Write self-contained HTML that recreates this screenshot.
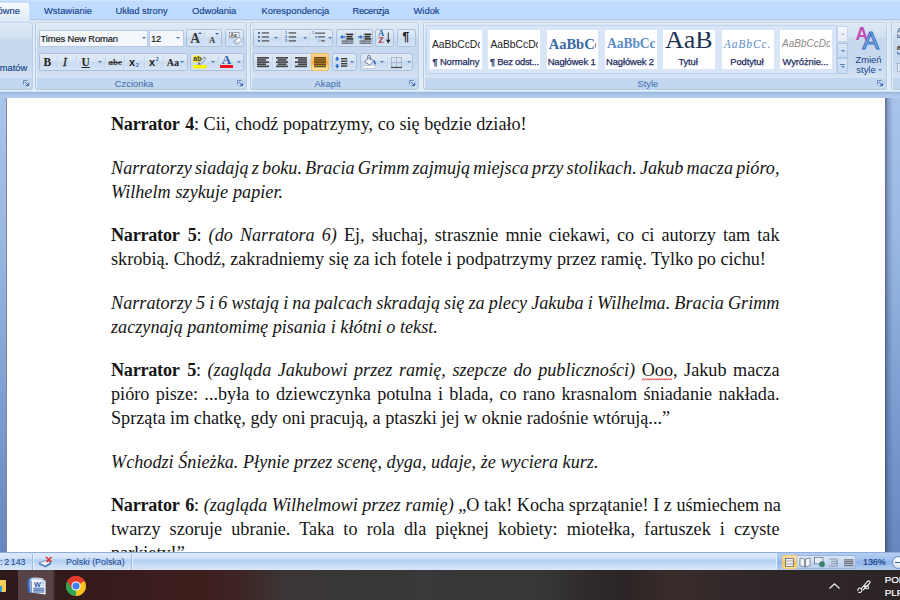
<!DOCTYPE html>
<html lang="pl"><head><meta charset="utf-8"><title>Word</title>
<style>
*{box-sizing:border-box;margin:0;padding:0}
html,body{width:900px;height:600px;overflow:hidden}
body{background:linear-gradient(#a8c4eb 0,#a8c4eb 97px,#97b6e2 250px,#7d9ed1 400px,#6687bf 552px,#6687bf 100%)}
body{position:relative;font-family:"Liberation Sans",sans-serif;font-size:9.4px;color:#15428b}
.abs{position:absolute}
#tabs{left:0;top:0;width:900px;height:18.8px;z-index:2;background:linear-gradient(#d3e5fc 0,#c3ddfe 1.5px,#bfdbff 3px,#bfdbff 100%)}
.tab{position:absolute;top:6.2px;height:10px;line-height:10px;white-space:nowrap;color:#15428b;-webkit-text-stroke:.15px #15428b}
#acttab{left:-20px;top:1.5px;width:49.7px;height:19px;border:1px solid #cfdff5;border-bottom:none;border-radius:3.5px 3.5px 0 0;background:linear-gradient(#f6f9fd,#eaf1f9 60%,#dfe8f5);box-shadow:0 0 1px #9fbfe8}
#ribbon{left:0;top:18.8px;width:900px;height:72.7px;background:linear-gradient(#dde7f5 0,#dbe7f5 12px,#dce8f6 30px,#dfebf8 60px,#e3eefa 70px);border-top:1.2px solid #a9c8ee;box-shadow:inset 0 1px 0 #d9e4f2}
#ribline{left:0;top:90.7px;width:900px;height:1.3px;background:#c6e9f3}
#wsTop{left:0;top:92px;width:900px;height:6px;background:linear-gradient(#98b3d6 0,#a5c0e5 1.5px,#b6cff0 100%)}
.grp{position:absolute;top:21.5px;height:68.5px;border:1px solid #b7cce7;border-top-color:#c6d6ea;border-radius:3px;background:linear-gradient(#dfe9f5 0,#d3e0f1 14px,#c8d9ee 15px,#c6d8ee 40px,#d6e4f4 55.5px,#c2d8f0 55.5px,#c1d7ef 100%);box-shadow:1px 0 0 #e6effa, inset 1px 1px 0 #e3ecf7}
.glabel{position:absolute;left:0;right:14px;bottom:-1px;height:11px;line-height:10px;text-align:center;color:#3e6aaa;font-size:9.4px}
.launch{position:absolute;right:2px;bottom:2.5px;width:7px;height:7px}
.bg{position:absolute;height:17.7px;border:1px solid #aac0dd;border-radius:2.5px;background:linear-gradient(#e3ecf7 0,#d6e3f3 45%,#c9daef 50%,#d5e4f5 100%)}
.sep{position:absolute;top:1px;bottom:1px;width:1px;background:#c6d6eb;box-shadow:1px 0 0 #dde8f5}
.combo{position:absolute;top:29.5px;height:17.5px;border:1px solid #b3c9e4;background:#f3f7fc;color:#1a1a1a;line-height:15.5px;padding-left:1px;white-space:nowrap;letter-spacing:-.13px;-webkit-text-stroke:.2px #1a1a1a}
.arr{position:absolute;width:0;height:0;border-left:2.2px solid transparent;border-right:2.2px solid transparent;border-top:2.8px solid #4f78b8}
svg{position:absolute;overflow:visible}
.ser,.sans{position:absolute;white-space:nowrap;color:#222;line-height:1.15}
.ser{font-family:"Liberation Serif",serif}
.sans{font-family:"Liberation Sans",sans-serif}
.arr.up{border-top:none;border-bottom:2.5px solid #5a7db5}
.arr.big{border-left-width:2.2px;border-right-width:2.2px;border-top-color:#3565b0;border-bottom-color:#3565b0}
.tile{position:absolute;top:30.3px;width:51.8px;height:38.5px;background:#fff;overflow:hidden}
.clip{position:absolute;left:0;top:1.4px;width:49.7px;height:37px;overflow:hidden}
.smp{position:absolute;white-space:nowrap;line-height:1.15}
.tn{position:absolute;top:26.7px;letter-spacing:-.1px;-webkit-text-stroke:.25px #1c2b63;white-space:nowrap;font-size:9.4px;line-height:10px;color:#1c2b63}
#page{left:6px;top:97.5px;width:879.3px;height:455px;background:#fff;border-left:1px solid #7f8791}
#pshadow{left:885.3px;top:97.5px;width:8px;height:455px;background:linear-gradient(90deg,rgba(40,50,75,.6),rgba(50,65,100,.28) 35%,rgba(60,80,120,0))}
#doc{left:111px;top:0;width:668.5px;font-family:"Liberation Serif",serif;font-size:18.2px;color:#151515;line-height:24px}
.ln{position:absolute;left:0;height:24px;white-space:nowrap;text-align:justify;text-align-last:justify}
.ln b{letter-spacing:-.27px;word-spacing:1.7px}
.sq{position:relative;display:inline-block}
#status{left:0;top:552px;width:900px;height:18px;font-size:8.9px;background:linear-gradient(#dce9fa 0,#d3e4f9 28%,#b6d1f5 42%,#b4d0f5 52%,#c6dcf7 68%,#d9e7f9 100%);border-top:1px solid #8fadd8}
#task{left:0;top:570px;width:900px;height:30px;background:linear-gradient(90deg,#2f1a1b 0,#351b1b 90px,#3d1e1d 200px,#3d2523 240px,#3b3636 285px,#38393a 420px,#373737 540px,#2f292a 590px,#2b2425 625px,#3a2c2b 672px,#33292a 720px,#2f2627 780px,#2c2425 900px)}
</style></head><body>
<div id="tabs" class="abs">
 <div id="acttab" class="abs"></div>
 <span class="tab" style="left:-2.5px">ówne</span>
 <span class="tab" style="left:44px">Wstawianie</span>
 <span class="tab" style="left:115.5px">Układ strony</span>
 <span class="tab" style="left:192px">Odwołania</span>
 <span class="tab" style="left:261.5px">Korespondencja</span>
 <span class="tab" style="left:352.5px;letter-spacing:-.35px">Recenzja</span>
 <span class="tab" style="left:413.5px">Widok</span>
</div>
<div id="ribbon" class="abs"></div>
<div id="ribline" class="abs"></div>
<div id="wsTop" class="abs"></div>

<!-- groups -->
<div class="grp" style="left:-10px;width:42.8px"><span class="abs" style="left:8.7px;top:40.5px;line-height:10px;white-space:nowrap;-webkit-text-stroke:.15px #15428b">matów</span><div class="launch"><svg style="left:0;top:0" width="7" height="7" viewBox="0 0 7 7"><path d="M.5 4.5 V.5 H4.5" fill="none" stroke="#6d8cbc" stroke-width="1"/><path d="M3.5 6.8 H6.8 V3.5" fill="none" stroke="#f4f8fd" stroke-width="1"/><path d="M2 2 L5.5 5.5 M5.8 2.8 V5.8 H2.8" fill="none" stroke="#3f69a8" stroke-width="1"/><path d="M3.2 5.8 H5.8 V3.2Z" fill="#3f69a8"/></svg></div></div>
<div class="grp" id="gFont" style="left:35.3px;width:211.5px"><div class="glabel">Czcionka</div><div class="launch"><svg style="left:0;top:0" width="7" height="7" viewBox="0 0 7 7"><path d="M.5 4.5 V.5 H4.5" fill="none" stroke="#6d8cbc" stroke-width="1"/><path d="M3.5 6.8 H6.8 V3.5" fill="none" stroke="#f4f8fd" stroke-width="1"/><path d="M2 2 L5.5 5.5 M5.8 2.8 V5.8 H2.8" fill="none" stroke="#3f69a8" stroke-width="1"/><path d="M3.2 5.8 H5.8 V3.2Z" fill="#3f69a8"/></svg></div></div>
<div class="grp" id="gPar" style="left:250.3px;width:168.5px"><div class="glabel">Akapit</div><div class="launch"><svg style="left:0;top:0" width="7" height="7" viewBox="0 0 7 7"><path d="M.5 4.5 V.5 H4.5" fill="none" stroke="#6d8cbc" stroke-width="1"/><path d="M3.5 6.8 H6.8 V3.5" fill="none" stroke="#f4f8fd" stroke-width="1"/><path d="M2 2 L5.5 5.5 M5.8 2.8 V5.8 H2.8" fill="none" stroke="#3f69a8" stroke-width="1"/><path d="M3.2 5.8 H5.8 V3.2Z" fill="#3f69a8"/></svg></div></div>
<div class="grp" id="gSty" style="left:422.5px;width:464.7px"><div class="glabel">Style</div><div class="launch"><svg style="left:0;top:0" width="7" height="7" viewBox="0 0 7 7"><path d="M.5 4.5 V.5 H4.5" fill="none" stroke="#6d8cbc" stroke-width="1"/><path d="M3.5 6.8 H6.8 V3.5" fill="none" stroke="#f4f8fd" stroke-width="1"/><path d="M2 2 L5.5 5.5 M5.8 2.8 V5.8 H2.8" fill="none" stroke="#3f69a8" stroke-width="1"/><path d="M3.2 5.8 H5.8 V3.2Z" fill="#3f69a8"/></svg></div></div>
<div class="grp" style="left:891.3px;width:30px">
 <svg style="left:4.5px;top:5px" width="8" height="10" viewBox="0 0 8 10"><path d="M.5 3.5 L2 .5 H6 L7.5 3.5 V9.5 H.5Z" fill="#9fb0cc" stroke="#52627f" stroke-width=".7"/><rect x=".5" y="4.5" width="7" height="2" fill="#eef2f8"/></svg>
 <span class="sans" style="left:4.5px;top:20.5px;font-size:8px;font-weight:bold;color:#444">ab</span>
 <svg style="left:4.5px;top:25px" width="8" height="7" viewBox="0 0 8 7"><path d="M0 4 C1 7 5 7 7 4.5" fill="none" stroke="#4c6fa8" stroke-width="1.1"/></svg>
 <svg style="left:5px;top:40.5px" width="7" height="9" viewBox="0 0 7 9"><rect x=".4" y=".4" width="7" height="8" fill="#e3e9f3" stroke="#93a2bc" stroke-width=".7"/></svg>
</div>


<!-- Czcionka group content -->
<div class="combo" style="left:38.5px;width:109.5px">Times New Roman<i class="arr" style="left:102px;top:6.5px"></i></div>
<div class="combo" style="left:149px;width:34.5px">12<i class="arr" style="left:26px;top:6.5px"></i></div>
<div class="bg" style="left:186.3px;top:29.2px;width:36px"><div class="sep" style="left:17px"></div>
 <span class="ser" style="left:3px;top:1.2px;font-size:13.6px;font-weight:bold;color:#3a3a3a">A</span><i class="arr up big" style="left:11px;top:2.3px"></i>
 <span class="ser" style="left:21.7px;top:5.8px;font-size:8.6px;font-weight:bold;color:#3a3a3a">A</span><i class="arr big" style="left:28px;top:2.6px"></i>
</div>
<div class="bg" style="left:225px;top:29.2px;width:19.3px">
 <svg style="left:2.7px;top:2.2px" width="14" height="13" viewBox="0 0 14 13"><rect x="0.4" y="0.4" width="9.6" height="5" fill="#f7f7f9" stroke="#7d8694" stroke-width=".7"/><text x="1.6" y="4.7" font-size="4.6" font-weight="bold" font-family="Liberation Sans" fill="#333">Aa</text><path d="M4.6 10 L10 5.4 L13 8 L8 12.4 Z" fill="#fdfdfe" stroke="#7d8aa0" stroke-width=".7"/><path d="M4.6 10 L6 8.8 L9.3 11.3 L8 12.4Z" fill="#dfe4ee" stroke="#7d8aa0" stroke-width=".5"/></svg>
</div>
<div class="bg" style="left:38.5px;top:53px;width:149px">
 <div class="sep" style="left:17.5px"></div><div class="sep" style="left:36.5px"></div><div class="sep" style="left:65.5px"></div><div class="sep" style="left:84px"></div><div class="sep" style="left:104.5px"></div><div class="sep" style="left:123.5px"></div>
 <span class="ser" style="left:4px;top:1.5px;font-size:11.5px;font-weight:bold">B</span>
 <span class="ser" style="left:23.5px;top:1.5px;font-size:11.5px;font-style:italic;-webkit-text-stroke:.3px #222">I</span>
 <span class="ser" style="left:42px;top:1.5px;font-size:11.5px;font-weight:bold;text-decoration:underline">U</span><i class="arr" style="left:58.5px;top:6.5px"></i>
 <span class="ser" style="left:69px;top:2.5px;font-size:9px;font-weight:bold;text-decoration:line-through;color:#3a3a3a">abc</span>
 <span class="sans" style="left:89.5px;top:1.5px;font-size:11px;font-weight:bold">x</span><span class="sans" style="left:96.5px;top:9.3px;font-size:4.8px;color:#2a5db0;font-weight:bold">2</span>
 <span class="sans" style="left:109.5px;top:1.5px;font-size:11px;font-weight:bold">x</span><span class="sans" style="left:116.5px;top:3px;font-size:4.6px;color:#2a5db0;font-weight:bold">2</span>
 <span class="ser" style="left:127.3px;top:2.8px;font-size:10px;font-weight:bold">Aa</span><i class="arr" style="left:140px;top:6.5px"></i>
</div>
<div class="bg" style="left:190px;top:53px;width:54.3px"><div class="sep" style="left:27px"></div>
 <svg style="left:2px;top:1px" width="15" height="14" viewBox="0 0 15 14"><rect x="0" y="10" width="13.5" height="3.4" fill="#fff200"/><rect x="0" y="0.4" width="8" height="7" fill="#f4ea3a"/><text x="0.3" y="6.2" font-size="7" font-weight="bold" font-family="Liberation Sans" fill="#3a3a20">ab</text><path d="M5.5 8 L11 2 L13 3.4 L7.6 9.2 Z" fill="#dfe6f2" stroke="#50607e" stroke-width=".7"/><path d="M5.5 8 L4.6 9.8 L7.6 9.2Z" fill="#3f4d68"/></svg>
 <i class="arr" style="left:19.5px;top:6.5px"></i>
 <span class="ser" style="left:30.8px;top:-1.2px;font-size:13px;font-weight:bold;color:#2f5fa8">A</span>
 <div class="abs" style="left:28.8px;top:11px;width:13.2px;height:3.4px;background:#f01019"></div>
 <i class="arr" style="left:46px;top:6.5px"></i>
</div>

<!-- Akapit group content -->
<div class="bg" style="left:253.3px;top:29.2px;width:80px"><div class="sep" style="left:26.5px"></div><div class="sep" style="left:54.5px"></div>
 <svg style="left:3.3px;top:2.3px" width="12" height="10.2" preserveAspectRatio="none" viewBox="0 0 13 11"><g fill="#2f5fa8"><rect x="0" y="0" width="2" height="2"/><rect x="0" y="4.3" width="2" height="2"/><rect x="0" y="8.6" width="2" height="2"/></g><g fill="#555"><rect x="4" y=".3" width="8" height="1.4"/><rect x="4" y="4.6" width="8" height="1.4"/><rect x="4" y="8.9" width="8" height="1.4"/></g></svg>
 <i class="arr" style="left:20px;top:6.5px"></i>
 <svg style="left:31px;top:2.3px" width="12" height="10.2" preserveAspectRatio="none" viewBox="0 0 13 11"><g fill="#2f5fa8" font-size="3.6" font-family="Liberation Sans" font-weight="bold"><text x="0" y="2.6">1</text><text x="0" y="6.9">2</text><text x="0" y="11">3</text></g><g fill="#555"><rect x="4" y=".3" width="8" height="1.4"/><rect x="4" y="4.6" width="8" height="1.4"/><rect x="4" y="8.9" width="8" height="1.4"/></g></svg>
 <i class="arr" style="left:48.5px;top:6.5px"></i>
 <svg style="left:57.5px;top:2.3px" width="14" height="10.2" preserveAspectRatio="none" viewBox="0 0 15 11"><g fill="#2f5fa8" font-size="3.4" font-family="Liberation Sans" font-weight="bold"><text x="0" y="2.6">1</text><text x="3.5" y="6.9">a</text><text x="7" y="11">i</text></g><g fill="#555"><rect x="3" y=".6" width="11" height="1.3"/><rect x="6.5" y="4.6" width="7.5" height="1.3"/><rect x="9.5" y="8.9" width="4.5" height="1.3"/></g></svg>
 <i class="arr" style="left:73.5px;top:6.5px"></i>
</div>
<div class="bg" style="left:336.3px;top:29.2px;width:36.3px"><div class="sep" style="left:17.5px"></div>
 <svg style="left:2.7px;top:3px" width="13.3" height="11" viewBox="0 0 13.3 11"><rect x="5.7" y="0" width=".7" height="11" fill="#666"/><g fill="#2b2b2b"><rect x="6.8" y=".6" width="6.5" height="1.6"/><rect x="6.8" y="2.9" width="5.6" height="1.6"/><rect x="6.8" y="5.1" width="6.5" height="1.6"/></g><g fill="#6a6f78"><rect x="1.5" y="7.4" width="11.8" height="1.4"/><rect x="1.5" y="9.5" width="11.8" height="1.4"/></g><path d="M0 4 L2.6 1.8 V3.2 H5 V4.8 H2.6 V6.2Z" fill="#2a6fd6"/></svg>
 <svg style="left:20.3px;top:3px" width="13.3" height="11" viewBox="0 0 13.3 11"><rect x="5.7" y="0" width=".7" height="11" fill="#666"/><g fill="#2b2b2b"><rect x="6.8" y=".6" width="6.5" height="1.6"/><rect x="6.8" y="2.9" width="5.6" height="1.6"/><rect x="6.8" y="5.1" width="6.5" height="1.6"/></g><g fill="#6a6f78"><rect x="1.5" y="7.4" width="11.8" height="1.4"/><rect x="1.5" y="9.5" width="11.8" height="1.4"/></g><path d="M5 4 L2.4 1.8 V3.2 H0 V4.8 H2.4 V6.2Z" fill="#2a6fd6"/></svg>
</div>
<div class="bg" style="left:375.3px;top:29.2px;width:19px">
 <span class="ser" style="left:1.7px;top:0.2px;font-size:8.6px;font-weight:bold;color:#2f5fa8;line-height:7.5px">A</span>
 <span class="ser" style="left:2px;top:7.2px;font-size:8.6px;font-weight:bold;color:#ad2f36;line-height:7.5px">Z</span>
 <svg style="left:9.7px;top:2px" width="4.5" height="12" viewBox="0 0 5 12"><path d="M2 0 H3 V8 H5 L2.5 12 L0 8 H2Z" fill="#222"/></svg>
</div>
<div class="bg" style="left:397px;top:29.2px;width:19px"><span class="sans" style="left:4.5px;top:1px;font-size:12px;font-weight:bold;color:#222;line-height:13px">¶</span></div>

<div class="bg" style="left:253.3px;top:53px;width:75.3px"><div class="sep" style="left:18px"></div><div class="sep" style="left:37px"></div>
 <svg style="left:2.7px;top:3.3px" width="12" height="10.2" preserveAspectRatio="none" viewBox="0 0 12 11"><g fill="#444"><rect x="0" y="0" width="12" height="1.8"/><rect x="0" y="2.3" width="9" height="1.8"/><rect x="0" y="4.6" width="12" height="1.8"/><rect x="0" y="6.9" width="9" height="1.8"/><rect x="0" y="9.2" width="12" height="1.8"/></g></svg>
 <svg style="left:21.7px;top:3.3px" width="12" height="10.2" preserveAspectRatio="none" viewBox="0 0 12 11"><g fill="#444"><rect x="0" y="0" width="12" height="1.8"/><rect x="1.5" y="2.3" width="9" height="1.8"/><rect x="0" y="4.6" width="12" height="1.8"/><rect x="1.5" y="6.9" width="9" height="1.8"/><rect x="0" y="9.2" width="12" height="1.8"/></g></svg>
 <svg style="left:40.7px;top:3.3px" width="12" height="10.2" preserveAspectRatio="none" viewBox="0 0 12 11"><g fill="#444"><rect x="0" y="0" width="12" height="1.8"/><rect x="3" y="2.3" width="9" height="1.8"/><rect x="0" y="4.6" width="12" height="1.8"/><rect x="3" y="6.9" width="9" height="1.8"/><rect x="0" y="9.2" width="12" height="1.8"/></g></svg>
 <div class="abs" style="left:56.5px;top:-1px;width:18px;height:17.5px;border:1px solid #f2bd62;border-radius:0 2px 2px 0;background:linear-gradient(#fdd293 0,#fcbf5d 40%,#fbac38 52%,#fdd67f 80%,#fee9a6 100%)"></div>
 <svg style="left:59.5px;top:3.3px" width="12" height="10.2" preserveAspectRatio="none" viewBox="0 0 12 11"><g fill="#6b4a14"><rect x="0" y="0" width="12" height="1.8"/><rect x="0" y="2.3" width="12" height="1.8"/><rect x="0" y="4.6" width="12" height="1.8"/><rect x="0" y="6.9" width="12" height="1.8"/><rect x="0" y="9.2" width="12" height="1.8"/></g></svg>
</div>
<div class="bg" style="left:331.7px;top:53px;width:25px">
 <svg style="left:2.3px;top:2px" width="13" height="13" viewBox="0 0 13 13"><path d="M2.2 .3 L4.4 3.6 H3 V5 H1.4 V3.6 H0Z M2.2 12.7 L4.4 9.4 H3 V8 H1.4 V9.4 H0Z" fill="#2a6fd6"/><g fill="#3c3c3c"><rect x="6" y="2" width="6.3" height="1.4"/><rect x="6" y="4.5" width="6.3" height="1.4"/><rect x="6" y="7" width="6.3" height="1.4"/><rect x="6" y="9.4" width="6.3" height="1.4"/></g></svg>
 <i class="arr" style="left:17px;top:6.5px"></i>
</div>
<div class="bg" style="left:359.7px;top:53px;width:53.8px"><div class="sep" style="left:26.5px"></div>
 <svg style="left:2.6px;top:1px" width="14" height="14" viewBox="0 0 14 14"><rect x="0" y="10.4" width="12.6" height="2.8" fill="#fdfdfd" stroke="#a4adba" stroke-width=".5"/><path d="M1.6 6.6 L6 2.6 L10.8 6 L6.6 10 Z" fill="#f4f6fa" stroke="#5b6680" stroke-width=".8"/><path d="M4.6 4 V1.6 a1.3 1.3 0 0 1 2.6 0 V5.5" fill="none" stroke="#5b6680" stroke-width=".8"/><path d="M10.4 5 c2.4 .4 3 3 2 5 c-1.2 -.6 -1.8 -2.6 -2 -5z" fill="#2a6fd6"/></svg>
 <i class="arr" style="left:19.5px;top:6.5px"></i>
 <svg style="left:30px;top:3px" width="11" height="11" viewBox="0 0 11 11"><rect x=".4" y=".4" width="10.2" height="10.2" fill="none" stroke="#a3afc2" stroke-width=".8"/><path d="M5.5 0 V11 M0 5.5 H11" stroke="#a3afc2" stroke-width=".8"/><rect x="0" y="9.8" width="11" height="1.3" fill="#4a4a4a"/></svg>
 <i class="arr" style="left:46px;top:6.5px"></i>
</div>

<!-- Style gallery -->
<div class="abs" style="left:426.3px;top:25.3px;width:411px;height:48.5px;border:1px solid #c0d4ed;background:#d8e6f7"></div>
<div class="tile" style="left:430.0px"><div class="clip"><span class="smp" style="font-family:'Liberation Sans',sans-serif;font-size:10.3px;color:#222;left:2px;top:7.6px">AaBbCcDc</span></div><span class="tn" style="left:2.5px">¶ Normalny</span></div>
<div class="tile" style="left:488.4px"><div class="clip"><span class="smp" style="font-family:'Liberation Sans',sans-serif;font-size:10.3px;color:#222;left:2px;top:7.6px">AaBbCcDc</span></div><span class="tn" style="left:1.7px;letter-spacing:-.25px">¶ Bez odst...</span></div>
<div class="tile" style="left:546.7px"><div class="clip"><span class="smp" style="font-family:'Liberation Serif',serif;font-weight:bold;font-size:14.5px;color:#3a67a6;left:2px;top:4px">AaBbCc</span></div><span class="tn" style="left:1px">Nagłówek 1</span></div>
<div class="tile" style="left:605.0px"><div class="clip"><span class="smp" style="font-family:'Liberation Serif',serif;font-weight:bold;font-size:13.6px;letter-spacing:-.1px;color:#5b8cc9;left:2px;top:4px">AaBbCc</span></div><span class="tn" style="left:1px">Nagłówek 2</span></div>
<div class="tile" style="left:663.4px"><div class="clip"><span class="smp" style="font-family:'Liberation Serif',serif;font-size:26px;color:#1f3556;left:1.5px;top:-6.3px">AaB</span></div><span class="tn" style="left:15px">Tytuł</span></div>
<div class="tile" style="left:721.8px"><div class="clip"><span class="smp" style="font-family:'Liberation Serif',serif;font-style:italic;font-size:11.5px;letter-spacing:.9px;color:#5b8cc9;left:2px;top:5.9px">AaBbCc.</span></div><span class="tn" style="left:8.5px">Podtytuł</span></div>
<div class="tile" style="left:780.1px"><div class="clip"><span class="smp" style="font-family:'Liberation Sans',sans-serif;font-style:italic;font-size:10px;color:#8e8a84;left:2px;top:6.8px">AaBbCcDc</span></div><span class="tn" style="left:2.5px">Wyróżnie...</span></div>
<div class="abs" style="left:837px;top:26px;width:11px;height:16px;border:1px solid #c3d3e8;background:linear-gradient(#f4f7fb,#e6ecf4);border-radius:2px 2px 0 0"><i class="arr up" style="left:2.5px;top:6px;border-bottom-color:#b4bccb"></i></div>
<div class="abs" style="left:837px;top:43px;width:11px;height:14.5px;border:1px solid #b0c7e5;background:linear-gradient(#dbe8f7,#c6daf2)"><i class="arr" style="left:2.5px;top:5.5px"></i></div>
<div class="abs" style="left:837px;top:58px;width:11px;height:15.5px;border:1px solid #b0c7e5;background:linear-gradient(#dbe8f7,#c6daf2);border-radius:0 0 2px 2px"><i class="abs" style="left:2px;top:4.5px;width:5px;height:1px;background:#5a7db5"></i><i class="arr" style="left:2.5px;top:7px"></i></div>
<svg style="left:855.5px;top:27px" width="24" height="23" viewBox="0 0 24 23"><text x="-.5" y="12.5" font-family="Liberation Sans" font-weight="bold" font-size="17.5" fill="#c24fb7">A</text><text x="6.5" y="22" font-family="Liberation Sans" font-size="24.5" fill="#8fb6ea" stroke="#3d73c2" stroke-width="1.1">A</text></svg>
<span class="abs" style="left:855.5px;top:54.5px;width:25px;text-align:center;line-height:10.3px;font-size:9.4px;white-space:nowrap">Zmień<br>style<i class="arr" style="position:relative;display:inline-block;top:-1.5px;left:2.5px"></i></span>
<div id="page" class="abs"></div>
<div id="pshadow" class="abs"></div>
<div id="doc" class="abs">
 <div class="ln" style="top:112px;width:412.5px"><b>Narrator 4</b>: Cii, chodź popatrzymy, co się będzie działo!</div>
 <div class="ln" style="top:156.0px;width:668.5px;word-spacing:-2px"><i>Narratorzy siadają z boku. Bracia Grimm zajmują miejsca przy stolikach. Jakub macza pióro,</i></div>
 <div class="ln" style="top:180.0px;width:172px"><i>Wilhelm szykuje papier.</i></div>
 <div class="ln" style="top:223.4px;width:668.5px"><b>Narrator 5</b>: <i>(do Narratora 6)</i> Ej, słuchaj, strasznie mnie ciekawi, co ci autorzy tam tak</div>
 <div class="ln" style="top:247.4px;width:651.5px">skrobią. Chodź, zakradniemy się za ich fotele i podpatrzymy przez ramię. Tylko po cichu!</div>
 <div class="ln" style="top:290.8px;width:668.5px;word-spacing:-2px"><i>Narratorzy 5 i 6 wstają i na palcach skradają się za plecy Jakuba i Wilhelma. Bracia Grimm</i></div>
 <div class="ln" style="top:314.8px;width:323.5px"><i>zaczynają pantomimę pisania i kłótni o tekst.</i></div>
 <div class="ln" style="top:358.2px;width:668.5px"><b>Narrator 5</b>: <i>(zagląda Jakubowi przez ramię, szepcze do publiczności)</i> <span class="sq">Ooo<svg style="left:0;top:20.3px" width="30" height="3" viewBox="0 0 30 3"><path d="M0 2.2 L1.15 0.5 L2.30 2.2 L3.45 0.5 L4.60 2.2 L5.75 0.5 L6.90 2.2 L8.05 0.5 L9.20 2.2 L10.35 0.5 L11.50 2.2 L12.65 0.5 L13.80 2.2 L14.95 0.5 L16.10 2.2 L17.25 0.5 L18.40 2.2 L19.55 0.5 L20.70 2.2 L21.85 0.5 L23.00 2.2 L24.15 0.5 L25.30 2.2 L26.45 0.5 L27.60 2.2 L28.75 0.5 L29.90 2.2" fill="none" stroke="#ec3b3b" stroke-width=".9"/></svg></span>, Jakub macza</div>
 <div class="ln" style="top:382.2px;width:668.5px">pióro pisze: ...była to dziewczynka potulna i blada, co rano krasnalom śniadanie nakłada.</div>
 <div class="ln" style="top:406.2px;width:557.5px">Sprząta im chatkę, gdy oni pracują, a ptaszki jej w oknie radośnie wtórują...”</div>
 <div class="ln" style="top:449.6px;width:487.5px"><i>Wchodzi Śnieżka. Płynie przez scenę, dyga, udaje, że wyciera kurz.</i></div>
 <div class="ln" style="top:493.0px;width:668.5px"><b>Narrator 6</b>: <i>(zagląda Wilhelmowi przez ramię)</i> „O tak! Kocha sprzątanie! I z uśmiechem na</div>
 <div class="ln" style="top:517.0px;width:668.5px">twarzy szoruje ubranie. Taka to rola dla pięknej kobiety: miotełka, fartuszek i czyste</div>
 <div class="ln" style="top:541.0px;width:72px">parkiety!”</div>
</div>
<div id="status" class="abs">
 <span class="abs" style="left:0;top:4px;line-height:10px;white-space:nowrap;word-spacing:-.8px">: 2 143</span>
 <div class="abs" style="left:32px;top:1px;width:1px;height:16px;background:#9bb8de;box-shadow:1px 0 0 #e8f1fc"></div>
 <svg style="left:39px;top:2.5px" width="14" height="12" viewBox="0 0 14 12"><path d="M0 7 L6 4.5 L12 6.5 L6.5 10Z" fill="#e8eef8" stroke="#4a6ea8" stroke-width=".7"/><path d="M0 7 V8.5 L6.5 11.5 V10Z" fill="#5d86c4"/><path d="M6.5 10 V11.5 L12 8 V6.5Z" fill="#3f69ad"/><path d="M7 1 L12.5 6 M12.5 1 L7.5 6" stroke="#e02a1f" stroke-width="1.5"/></svg>
 <span class="abs" style="left:66px;top:4px;line-height:10px;white-space:nowrap">Polski (Polska)</span>
 <div class="abs" style="left:131px;top:1px;width:1px;height:16px;background:#9bb8de;box-shadow:1px 0 0 #e8f1fc"></div>
 <div class="abs" style="left:776px;top:0;width:124px;height:18px;background:linear-gradient(#b4cef2 0,#a3c1ec 35%,#8fb4e7 50%,#9fbfec 70%,#b9d2f3 100%);border-left:1.5px solid #e6f0fb"></div>
 <div class="abs" style="left:781.5px;top:1.5px;width:74.5px;height:14.5px;border:1px solid #9ab5db;border-radius:2px;background:linear-gradient(#d9e6f6,#b9cfee)"></div>
 <div class="abs" style="left:781.5px;top:1.5px;width:15px;height:14.5px;border:1px solid #f3c878;border-radius:2px 0 0 2px;background:linear-gradient(#fbdba6 0,#fad394 42%,#f5b73c 50%,#f8c758 72%,#fde78e 100%)"></div>
 <svg style="left:785px;top:4.5px" width="9" height="9" viewBox="0 0 9 9"><rect x=".4" y=".4" width="8.2" height="8.2" fill="#f3f3f3" stroke="#6b6b6b" stroke-width=".8"/><path d="M0 3 H9 M0 6 H9" stroke="#6b6b6b" stroke-width=".6"/></svg>
 <svg style="left:799.5px;top:4px" width="10" height="10" viewBox="0 0 10 10"><path d="M0 1 L4.5 2 V10 L0 8.5Z M10 1 L5.5 2 V10 L10 8.5Z" fill="#f3f5f8" stroke="#5c6b80" stroke-width=".7"/></svg>
 <svg style="left:813.5px;top:4px" width="11" height="10" viewBox="0 0 11 10"><rect x=".4" y=".4" width="8.5" height="6.5" fill="#e8edf5" stroke="#5c6b80" stroke-width=".7"/><circle cx="8" cy="7.2" r="2.6" fill="#3a8a5a" stroke="#2a5d8f" stroke-width=".5"/></svg>
 <svg style="left:829px;top:4.5px" width="10" height="9" viewBox="0 0 10 9"><path d="M0 1 H7 M2 3.3 H9 M2 5.6 H9 M0 8 H7" stroke="#8a98ad" stroke-width="1"/><path d="M8 0.5 V8.5" stroke="#8a98ad" stroke-width="1.2"/></svg>
 <svg style="left:844px;top:5.5px" width="9.5" height="7.5" viewBox="0 0 10 9" preserveAspectRatio="none"><path d="M0 1 H10 M0 3.3 H10 M0 5.6 H10 M0 8 H10" stroke="#70757e" stroke-width="1.6"/></svg>
 <span class="abs" style="left:863px;top:4px;line-height:10px;white-space:nowrap;-webkit-text-stroke:.2px #15428b">136%</span>
 <div class="abs" style="left:891.5px;top:3px;width:13px;height:13px;border-radius:50%;border:1px solid #6f8fbf;background:radial-gradient(circle at 50% 35%,#fff,#c8daf2)"></div>
 <div class="abs" style="left:895px;top:8.7px;width:6px;height:1.6px;background:#3d5f94"></div>
</div>
<div id="task" class="abs">
 <div class="abs" style="left:-2px;top:10px;width:7.5px;height:12px;background:#f7d154;border-radius:1px"></div><div class="abs" style="left:-2px;top:15.5px;width:4px;height:6.5px;background:#3a96dd"></div>
 <div class="abs" style="left:17.5px;top:0;width:35.5px;height:29.5px;background:#574346"></div>
 <div class="abs" style="left:53px;top:0;width:1.5px;height:29.5px;background:#43302f"></div>
 <svg style="left:27px;top:6.5px" width="19" height="18" viewBox="0 0 19 18"><path d="M3 1.2 C6 .2 11 .3 16.5 1.5 V4 H3Z" fill="#c9d6ea"/><path d="M4.5 2.6 L18.6 3.6 V17.6 L4.5 15.6Z" fill="#f3f6fb"/><path d="M.2 4.5 C.8 2 2.6 .8 5 .6 C4 2.4 3.8 4 3.9 6 L4.6 15.6 L1.2 16 C.6 12 .2 8 .2 4.5Z" fill="#3467bd"/><path d="M2.5 3 C3 1.8 3.8 1.1 5 .6 C4 2.4 3.8 4 3.9 6 L4.6 15.6 L3.2 15.8 C2.6 11 2.3 7 2.5 3Z" fill="#8fb1e6"/><text x="7" y="9.6" font-family="Liberation Sans" font-weight="bold" font-size="7.2" fill="#2b57a5">W</text><path d="M14.3 4.8 H17.6 M14.3 6.6 H17.6 M14.3 8.4 H17.6" stroke="#9bb5e0" stroke-width=".9"/><path d="M6.3 11.2 H17.3 M6.3 13.1 H17.3 M6.3 15 H17.3" stroke="#2f5db0" stroke-width="1.1"/></svg>
 <svg style="left:66.4px;top:6px" width="20" height="20" viewBox="0 0 20 20"><circle cx="10" cy="10" r="10" fill="#e33b2e"/><path d="M10 10 L1.34 5 A10 10 0 0 0 10 20 L14.2 12.4 Z" fill="#2da94f"/><path d="M10 10 L10 20 A10 10 0 0 0 18.66 5 L10 5 Z" fill="#fcc31e"/><path d="M10 10 L18.66 5 A10 10 0 0 0 1.34 5 L5.8 12.4 Z" fill="#e33b2e"/><path d="M10 5.3 L18.5 5.3 A10 10 0 0 0 1.34 5 L5.9 12.6 Z" fill="#e33b2e"/><circle cx="10" cy="10" r="4.6" fill="#fff"/><circle cx="10" cy="10" r="3.6" fill="#3b7ff0"/></svg>
 <svg style="left:828.5px;top:13px" width="11" height="6" viewBox="0 0 11 6"><path d="M.5 5.5 L5.5 .8 L10.5 5.5" fill="none" stroke="#f2f2f2" stroke-width="1.2"/></svg>
 <svg style="left:856.5px;top:9.5px" width="14" height="14" viewBox="0 0 14 14"><path d="M1 11 C0 8.5 3 7 4.5 9 C6 11 3 13.5 1.5 12 M4 9 L10.5 1.5 C12 0 14 2 12.5 3.5 L6 10 M7 7 C9 5 12.5 6 11.5 8 C10.8 9.3 9 8.5 8 8" fill="none" stroke="#f2f2f2" stroke-width="1.1"/></svg>
 <span class="abs" style="left:884.7px;top:2.6px;color:#fff;font-size:9.8px;line-height:13.8px;white-space:nowrap;-webkit-text-stroke:.2px #fff">POL<br>PLP</span>
</div>
</body></html>
